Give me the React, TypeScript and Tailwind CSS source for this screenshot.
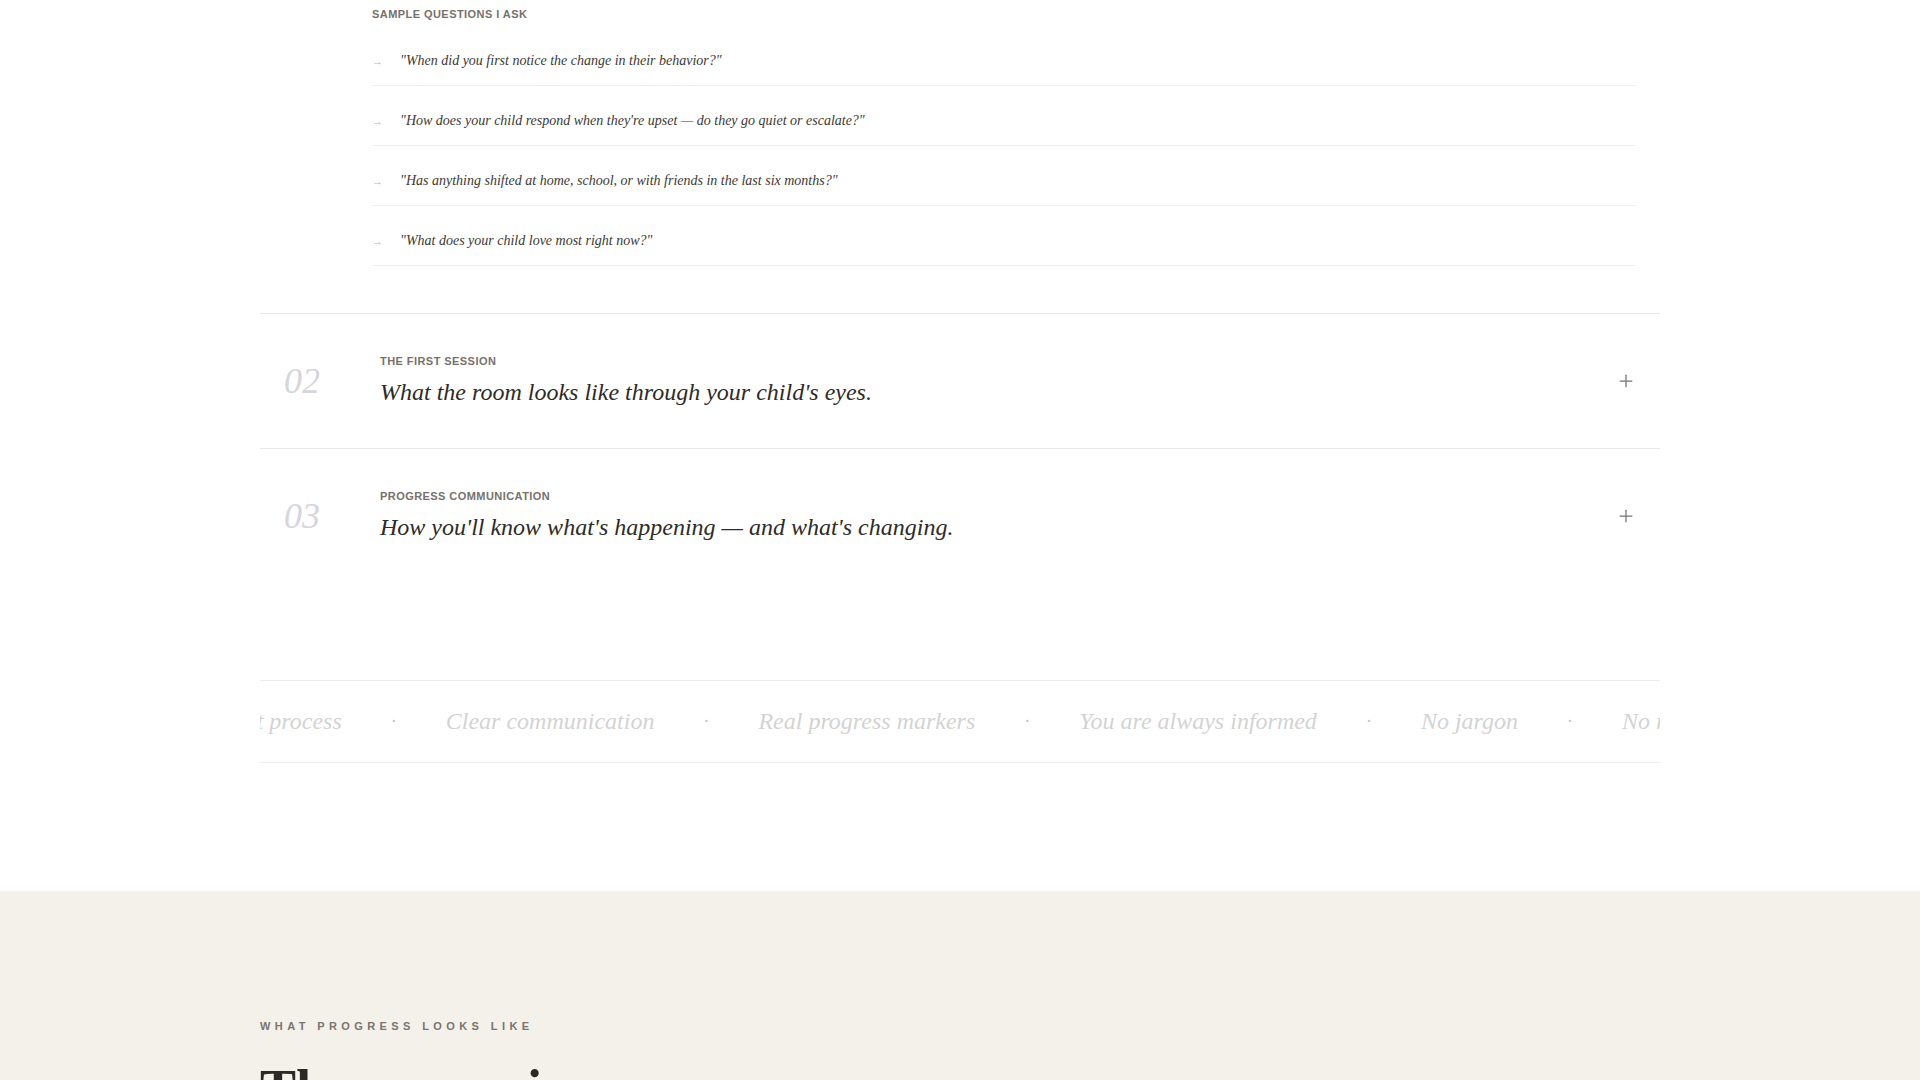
import React from 'react';
import { Plus } from 'lucide-react';

const questions = [
  '"When did you first notice the change in their behavior?"',
  '"How does your child respond when they\'re upset — do they go quiet or escalate?"',
  '"Has anything shifted at home, school, or with friends in the last six months?"',
  '"What does your child love most right now?"',
];

const rows = [
  { num: '02', label: 'The First Session', title: "What the room looks like through your child's eyes." },
  { num: '03', label: 'Progress Communication', title: "How you'll know what's happening — and what's changing." },
];

const marquee = [
  'A transparent process',
  'Clear communication',
  'Real progress markers',
  'You are always informed',
  'No jargon',
  'No rushed decisions',
];

const serif = { fontFamily: '"Liberation Serif", "Times New Roman", serif' };
const sans = { fontFamily: '"Liberation Sans", Arial, sans-serif' };

const App: React.FC = () => {
  return (
    <div className="bg-white min-h-screen" style={sans}>
      <section className="max-w-[1400px] mx-auto">
        {/* expanded content of step 01 */}
        <div className="pl-[112px] pr-6 pt-[6px] pb-[47px]">
          <p className="text-[11px] leading-4 font-bold uppercase tracking-[0.04em] text-[#76716c]">
            Sample questions I ask
          </p>
          <ul className="mt-[4px]">
            {questions.map((q, i) => (
              <li key={i} className="flex items-center pt-[26px] pb-[15px] border-b border-[#f1efec]">
                <span className="w-7 shrink-0 text-[11px] leading-[18px] text-[#c9b48f]">→</span>
                <span className="text-[14px] leading-[18px] italic text-[#3b3835]" style={serif}>
                  {q}
                </span>
              </li>
            ))}
          </ul>
        </div>

        {rows.map((r) => (
          <div key={r.num} className="flex items-center border-t border-[#ebe9e6] px-6 py-10">
            <span className="w-24 shrink-0 text-[36px] leading-none italic text-[#d6d6da]" style={serif}>
              {r.num}
            </span>
            <div className="flex-1">
              <p className="text-[11px] leading-[14px] font-bold uppercase tracking-[0.04em] text-[#76716c] mb-2">
                {r.label}
              </p>
              <h3 className="text-[24px] leading-8 italic text-[#2e2b28]" style={serif}>
                {r.title}
              </h3>
            </div>
            <Plus className="w-5 h-5 text-[#75726f]" strokeWidth={1.5} />
          </div>
        ))}

        {/* marquee */}
        <div className="mt-[97px] mb-[128px] border-y border-[#efedea] overflow-hidden">
          <div className="flex items-center gap-[49px] py-[25px] whitespace-nowrap -ml-[128px]">
            {marquee.map((m, i) => (
              <React.Fragment key={i}>
                <span className="text-[24px] leading-[31px] italic text-[#d3d3d3]" style={serif}>
                  {m}
                </span>
                <span className="text-[18px] leading-[31px] text-[#c4c4c4]" style={serif}>·</span>
              </React.Fragment>
            ))}
          </div>
        </div>
      </section>

      <section className="bg-[#f4f0ea] pt-[127px] pb-24">
        <div className="max-w-[1400px] mx-auto">
          <p className="text-[11px] leading-4 font-bold uppercase tracking-[0.4em] text-[#7a746e]">
            What progress looks like
          </p>
          <h2 className="mt-[26px] text-[54px] leading-[1.1] font-bold text-[#2b2826]" style={serif}>
            The course is uneven.
          </h2>
        </div>
      </section>
    </div>
  );
};

export default App;
